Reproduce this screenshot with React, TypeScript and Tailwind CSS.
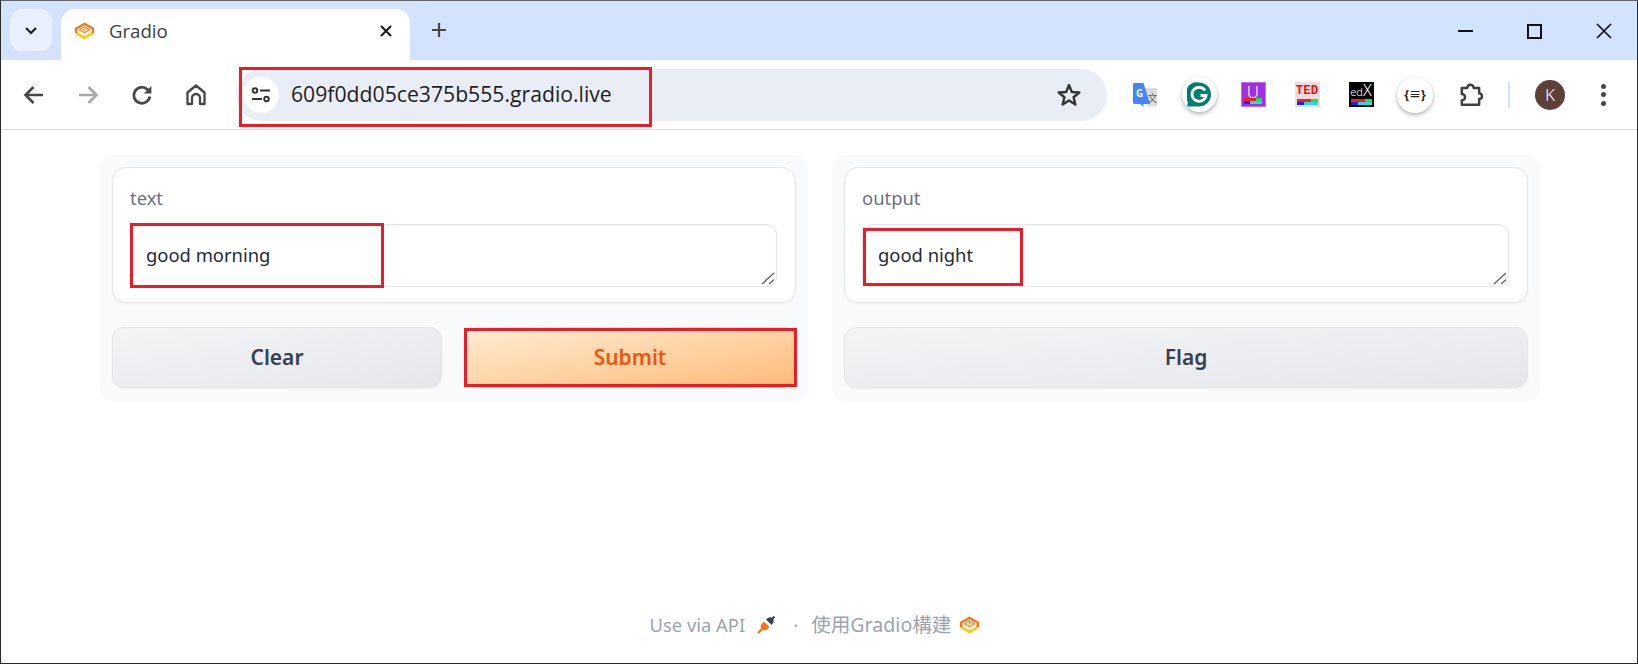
import React from "react";

const GradioLogo = ({ size = 22 }: { size?: number }) => (
  <svg width={size} height={size * 0.85} viewBox="0 0 20 17" fill="none">
    <path d="M2 10.5 10 15.2 18 10.5" stroke="#facc15" strokeWidth="2.6" />
    <path d="M2 10.5 2 6.3 10 1.8 18 6.3 18 10.5" stroke="#f97316" strokeWidth="2.2" fill="none" />
    <path d="M5.2 7.5 10 4.9 14.8 7.5 10 10.1Z" fill="#fff" stroke="#fb923c" strokeWidth="1.5" />
    <circle cx="10" cy="7.5" r="1" fill="#f59e0b" />
  </svg>
);

const Cell = ({ children }: { children: React.ReactNode }) => (
  <div className="w-[54px] h-full flex items-center justify-center shrink-0">{children}</div>
);

const Stripes = () => (
  <div className="absolute left-[2px] right-[2px] bottom-[2px] flex flex-col">
    <div className="flex h-[3px]">
      <div className="w-2/3 bg-[#ff1a1a]" />
      <div className="w-1/3 bg-[#22dd44]" />
    </div>
    <div className="flex h-[3px]">
      <div className="w-1/3 bg-[#2222dd]" />
      <div className="w-2/3 bg-[#22dddd]" />
    </div>
  </div>
);

const Box = ({ value, redBox }: { value: string; redBox: string }) => (
  <div className="relative">
    <textarea
      readOnly
      rows={2}
      defaultValue={value}
      className="block w-full h-[63px] rounded-[10px] border border-[#e5e7eb] bg-white px-[15px] pt-[16px] pb-[15px] text-[18.4px] leading-[28px] text-[#1f2937] shadow-[inset_0_1px_2px_rgba(0,0,0,0.05)] outline-none resize-none"
    />
    <svg width="14" height="13" viewBox="0 0 14 13" fill="none" className="absolute right-[2px] bottom-[2px]">
      <path d="M1 12 13 1M8 12 13 7.5" stroke="#666" strokeWidth="1.4" />
    </svg>
    <div className={redBox} />
  </div>
);

const Card = ({ label, value, redBox }: { label: string; value: string; redBox: string }) => (
  <div className="h-[136px] rounded-[14px] border border-[#e5e7eb] bg-white pl-[17px] pr-[18px] pt-[18px] shadow-[0_1px_2px_rgba(0,0,0,0.05)]">
    <div className="h-[24px] mb-[14px] text-[18.4px] leading-[24px] text-[#6b7280]">{label}</div>
    <Box value={value} redBox={redBox} />
  </div>
);

const GrayButton = ({ label, width }: { label: string; width: string }) => (
  <button className={`${width} h-[61px] rounded-[12px] border border-[#e5e7eb] bg-gradient-to-br from-[#f3f4f6] to-[#e5e7eb] text-[21px] font-semibold text-[#374151] shadow-[0_1px_2px_rgba(0,0,0,0.05)]`}>
    {label}
  </button>
);

export default function App() {
  return (
    <div className="h-screen w-full flex flex-col border border-[#2a2a2a] border-t-[#5f6368] bg-white font-['Noto_Sans','Noto_Sans_CJK_TC',sans-serif] overflow-hidden">
      {/* tab strip */}
      <div className="h-[59px] shrink-0 bg-[#d3e3fd] flex items-end pl-[9px]">
        <div className="w-[42px] h-[42px] mb-[9px] rounded-[12px] bg-[#e8f0fe] flex items-center justify-center">
          <svg width="14" height="9" viewBox="0 0 14 9" fill="none">
            <path d="M2 2 7 7 12 2" stroke="#1f1f1f" strokeWidth="2.2" />
          </svg>
        </div>
        <div className="ml-[9px] w-[349px] h-[51px] bg-white rounded-t-[14px] flex items-center pl-[13px] pr-[16px] pb-[7px]">
          <GradioLogo size={21} />
          <span className="ml-[14px] flex-1 text-[18.6px] text-[#3c4043] font-['Open_Sans',sans-serif]">Gradio</span>
          <svg width="14" height="14" viewBox="0 0 14 14" fill="none" className="mr-[1px]">
            <path d="M2 2 12 12M12 2 2 12" stroke="#1f1f1f" strokeWidth="2.2" />
          </svg>
        </div>
        <div className="ml-[9px] mb-[10px] w-[40px] h-[40px] flex items-center justify-center">
          <svg width="16" height="16" viewBox="0 0 16 16" fill="none">
            <path d="M8 1V15M1 8H15" stroke="#474747" strokeWidth="2.2" />
          </svg>
        </div>
        <div className="ml-auto mr-[-2px] mb-[9px] flex items-center h-[40px]">
          <div className="w-[67px] flex justify-center">
            <div className="w-[15px] h-[2px] bg-[#111]" />
          </div>
          <div className="w-[70px] flex justify-center">
            <div className="w-[15px] h-[15px] border-2 border-[#111]" />
          </div>
          <div className="w-[70px] flex justify-center">
            <svg width="16" height="16" viewBox="0 0 16 16" fill="none">
              <path d="M1 1 15 15M15 1 1 15" stroke="#111" strokeWidth="1.7" />
            </svg>
          </div>
        </div>
      </div>

      {/* toolbar */}
      <div className="h-[70px] shrink-0 bg-white border-b border-[#dadce0] flex items-center pl-[6px] pr-[8px] rounded-tl-[14px] rounded-tr-[14px]">
        <Cell>
          <svg width="22" height="20" viewBox="0 0 22 20" fill="none">
            <path d="M20 10H3.5M10.5 2 2.5 10 10.5 18" stroke="#474747" strokeWidth="2.6" />
          </svg>
        </Cell>
        <Cell>
          <svg width="22" height="20" viewBox="0 0 22 20" fill="none">
            <path d="M2 10H18.5M11.5 2 19.5 10 11.5 18" stroke="#a8a8a8" strokeWidth="2.6" />
          </svg>
        </Cell>
        <Cell>
          <svg width="22" height="22" viewBox="0 0 22 22" fill="none">
            <path d="M18.8 12.5a8 8 0 1 1-2.6-7.2L19 8" stroke="#474747" strokeWidth="2.7" />
            <path d="M20.4 2v7.6h-7.6z" fill="#474747" />
          </svg>
        </Cell>
        <Cell>
          <svg width="22" height="23" viewBox="0 0 22 23" fill="none">
            <path d="M2.5 21V9.5L11 2.5l8.5 7V21H15v-6a4 4 0 0 0-8 0v6Z" stroke="#474747" strokeWidth="2.3" strokeLinejoin="round" />
          </svg>
        </Cell>

        <div className="relative ml-[13px] w-[871px] h-[52px] rounded-full bg-[#e9edf6] flex items-center pl-[7px] pr-[25px]">
          <div className="w-[36px] h-[36px] rounded-full bg-white flex items-center justify-center shrink-0">
            <svg width="20" height="16" viewBox="0 0 20 16" fill="none">
              <circle cx="4" cy="3.5" r="2.3" stroke="#333" strokeWidth="1.9" />
              <path d="M9 3.5H19M1 12H11" stroke="#333" strokeWidth="2" />
              <circle cx="15.5" cy="12" r="2.3" stroke="#333" strokeWidth="1.9" />
            </svg>
          </div>
          <span className="ml-[12px] flex-1 pb-[2px] text-[21.2px] text-[#1f1f1f] font-['Open_Sans',sans-serif]">609f0dd05ce375b555.gradio.live</span>
          <svg width="26" height="26" viewBox="0 0 24 24" fill="none">
            <path d="M12 2.8 14.6 9.2l6.9.5-5.3 4.4 1.7 6.7L12 17.1l-5.9 3.7 1.7-6.7-5.3-4.4 6.9-.5Z" stroke="#333" strokeWidth="2.2" strokeLinejoin="round" />
          </svg>
          <div className="absolute left-[3px] top-[-2px] w-[413px] h-[60px] border-[3px] border-[#ed1c24]" />
        </div>

        <div className="ml-[11px] flex items-center h-full">
          <Cell>
            <svg width="26" height="26" viewBox="0 0 26 26" fill="none">
              <path d="M13 6H25V24.5H15Z" fill="#dcdcdc" />
              <text x="15.5" y="20" fontSize="10" fill="#666" fontFamily="Noto Sans CJK SC, sans-serif">文</text>
              <path d="M1 2.5Q1 1 2.5 1H11.5L18 22H11L12 25 8 22H2.5Q1 22 1 20.5Z" fill="#4285f4" />
              <text x="4" y="15" fontSize="10" fontWeight="700" fill="#fff" fontFamily="Noto Sans, sans-serif">G</text>
            </svg>
          </Cell>
          <Cell>
            <div className="w-[35px] h-[35px] rounded-full bg-white shadow-[0_2px_4px_rgba(0,0,0,0.3)] flex items-center justify-center">
              <svg width="24" height="25" viewBox="0 0 24 25" fill="none">
                <path d="M12 .5a12 12 0 1 1 0 24H1.5q-1.5 0-1.2-1.5L1 20a12 12 0 0 1 11-19.5Z" fill="#027e6f" />
                <path d="M18 8.5A7 7 0 1 0 19 13.5H13.5" stroke="#fff" strokeWidth="2.8" />
              </svg>
            </div>
          </Cell>
          <Cell>
            <div className="relative w-[25px] h-[25px] bg-[#a030e0] border border-[#c070f0] text-center text-[17px] leading-[18px] font-light text-white">
              U
              <Stripes />
            </div>
          </Cell>
          <Cell>
            <div className="relative w-[25px] h-[25px] bg-[#ecdcdc] text-center text-[12.5px] leading-[18px] font-bold text-[#f01010] font-['Liberation_Mono',monospace]">
              TED
              <Stripes />
            </div>
          </Cell>
          <Cell>
            <div className="relative w-[25px] h-[25px] bg-black text-center leading-[17px] text-white whitespace-nowrap">
              <span className="text-[11px] font-light">ed</span>
              <span className="text-[16px] font-light">X</span>
              <Stripes />
            </div>
          </Cell>
          <Cell>
            <div className="w-[36px] h-[36px] rounded-full bg-white shadow-[0_2px_4px_rgba(0,0,0,0.3)] flex items-center justify-center text-[12px] font-bold text-[#222]">
              {"{≡}"}
            </div>
          </Cell>
          <div className="w-[54px] ml-[2px] h-full flex items-center justify-center shrink-0">
            <svg width="26" height="26" viewBox="0 0 24 24" fill="none">
              <path d="M3.5 5.5H8.5a3 3 0 0 1 6 0H19.5v5a2.6 2.6 0 0 1 0 5.2V21H3.5v-4a3 3 0 0 0 0-6Z" stroke="#3f3f3f" strokeWidth="2.3" strokeLinejoin="round" />
            </svg>
          </div>
          <div className="w-[2px] h-[26px] ml-[10px] bg-[#d3e3fd]" />
          <div className="ml-[25px] w-[30px] h-[30px] rounded-full bg-[#5d4037] flex items-center justify-center text-[17px] font-light text-white">K</div>
          <div className="ml-[36px] flex flex-col gap-[3.5px]">
            <div className="w-[5px] h-[5px] rounded-full bg-[#474747]" />
            <div className="w-[5px] h-[5px] rounded-full bg-[#474747]" />
            <div className="w-[5px] h-[5px] rounded-full bg-[#474747]" />
          </div>
        </div>
      </div>

      {/* gradio page */}
      <main className="flex-1 flex flex-col pl-[99px] pr-[97px] pt-[25px]">
        <div className="flex gap-[24px]">
          <section className="flex-1 h-[246px] rounded-[14px] bg-[#f9fafb] p-[12px] pb-0">
            <Card label="text" value="good morning" redBox="absolute left-[0px] top-[-1px] w-[254px] h-[65px] border-[3px] border-[#ed1c24]" />
            <div className="mt-[24px] flex gap-[22px]">
              <GrayButton label="Clear" width="w-[330px]" />
              <div className="relative flex-1">
                <button className="w-full h-[61px] rounded-[12px] bg-gradient-to-br from-[#ffedd5] to-[#fdba74] text-[21px] font-semibold text-[#ea580c]">
                  Submit
                </button>
                <div className="absolute left-0 top-[1px] w-[333px] h-[59px] border-[3px] border-[#ed1c24]" />
              </div>
            </div>
          </section>
          <section className="flex-1 h-[246px] rounded-[14px] bg-[#f9fafb] p-[12px] pb-0">
            <Card label="output" value="good night" redBox="absolute left-[1px] top-[4px] w-[160px] h-[58px] border-[3px] border-[#ed1c24]" />
            <div className="mt-[24px] flex">
              <GrayButton label="Flag" width="flex-1" />
            </div>
          </section>
        </div>

        <footer className="mt-auto mb-[24px] pr-[10px] h-[28px] flex items-center justify-center text-[18.4px] text-[#9ca3af]">
          <span>Use via API</span>
          <svg width="20" height="20" viewBox="0 0 20 20" fill="none" className="ml-[11px]">
            <path d="M8 6.5 13.5 12 11.5 14a4 4 0 0 1-5.5 0 4 4 0 0 1 0-5.5Z" fill="#f97316" />
            <path d="M6.5 13.5 2 18" stroke="#f97316" strokeWidth="2.4" />
            <path d="M10 4.5 15.5 10 17 8a3.6 3.6 0 0 0-5-5Z" fill="#374151" />
            <path d="M15 5 18.5 1.5" stroke="#374151" strokeWidth="2" />
          </svg>
          <span className="ml-[17px] mr-[13px]">·</span>
          <span className="text-[19.6px]">使用Gradio構建</span>
          <span className="ml-[8px] flex">
            <GradioLogo size={21} />
          </span>
        </footer>
      </main>
    </div>
  );
}
